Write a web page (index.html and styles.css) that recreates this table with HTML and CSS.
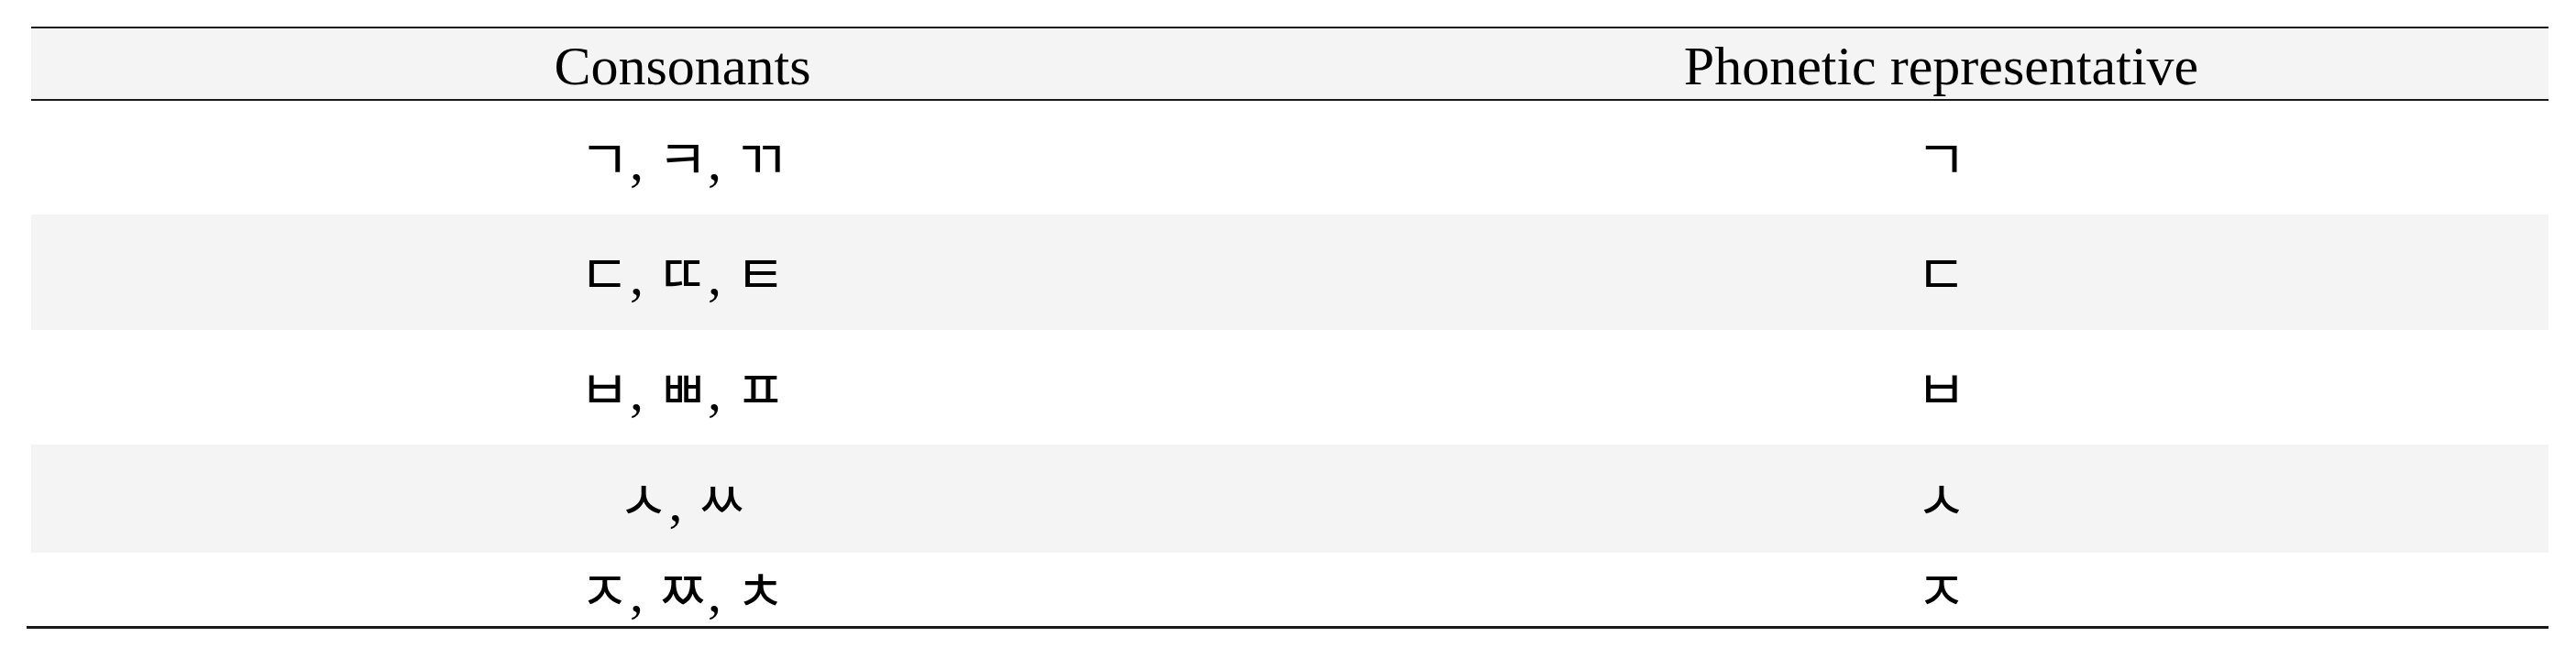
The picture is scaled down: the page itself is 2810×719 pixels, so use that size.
FILE: index.html
```html
<!DOCTYPE html>
<html lang="en">
<head>
<meta charset="utf-8">
<title>Consonants</title>
<link rel="stylesheet" href="styles.css">
</head>
<body>
<div class="table-wrap">
<table class="jamo-table">
  <colgroup>
    <col class="col-a">
    <col class="col-b">
  </colgroup>
  <thead>
    <tr class="head-row">
      <th>Consonants</th>
      <th>Phonetic representative</th>
    </tr>
  </thead>
  <tbody>
    <tr class="row r1">
      <td>ㄱ, ㅋ, ㄲ</td>
      <td>ㄱ</td>
    </tr>
    <tr class="row r2 shaded">
      <td>ㄷ, ㄸ, ㅌ</td>
      <td>ㄷ</td>
    </tr>
    <tr class="row r3">
      <td>ㅂ, ㅃ, ㅍ</td>
      <td>ㅂ</td>
    </tr>
    <tr class="row r4 shaded">
      <td>ㅅ, ㅆ</td>
      <td>ㅅ</td>
    </tr>
    <tr class="row r5">
      <td>ㅈ, ㅉ, ㅊ</td>
      <td>ㅈ</td>
    </tr>
  </tbody>
</table>
<div class="bottom-rule"></div>
</div>
</body>
</html>
```

FILE: styles.css
```css
html, body {
  margin: 0;
  padding: 0;
  background: #ffffff;
}

body {
  padding: 29px 30px 0 29px;
}

.table-wrap {
  width: 2751px;
}

.jamo-table {
  width: 2746px;
  margin-left: 5px;
  border-collapse: collapse;
  table-layout: fixed;
  font-family: "Liberation Serif", "Noto Sans CJK KR", serif;
  font-size: 60px;
  color: #000;
  border-top: 2px solid #1a1a1a;
}

.bottom-rule {
  height: 3px;
  background: #1a1a1a;
}

.col-a { width: 1421px; }
.col-b { width: 1325px; }

.jamo-table th,
.jamo-table td {
  padding: 0;
  text-align: center;
  vertical-align: middle;
  line-height: 1;
}

.jamo-table td {
  padding-top: 8px;
}

.head-row {
  height: 79px;
  background: #f4f4f4;
  border-bottom: 2px solid #1a1a1a;
}

.head-row th {
  font-weight: normal;
  padding-top: 4px;
}

.r1 { height: 125px; }
.r2 { height: 126px; }
.r3 { height: 125px; }
.r4 { height: 118px; }
.r5 { height: 80px; }

.shaded { background: #f4f4f4; }
```
